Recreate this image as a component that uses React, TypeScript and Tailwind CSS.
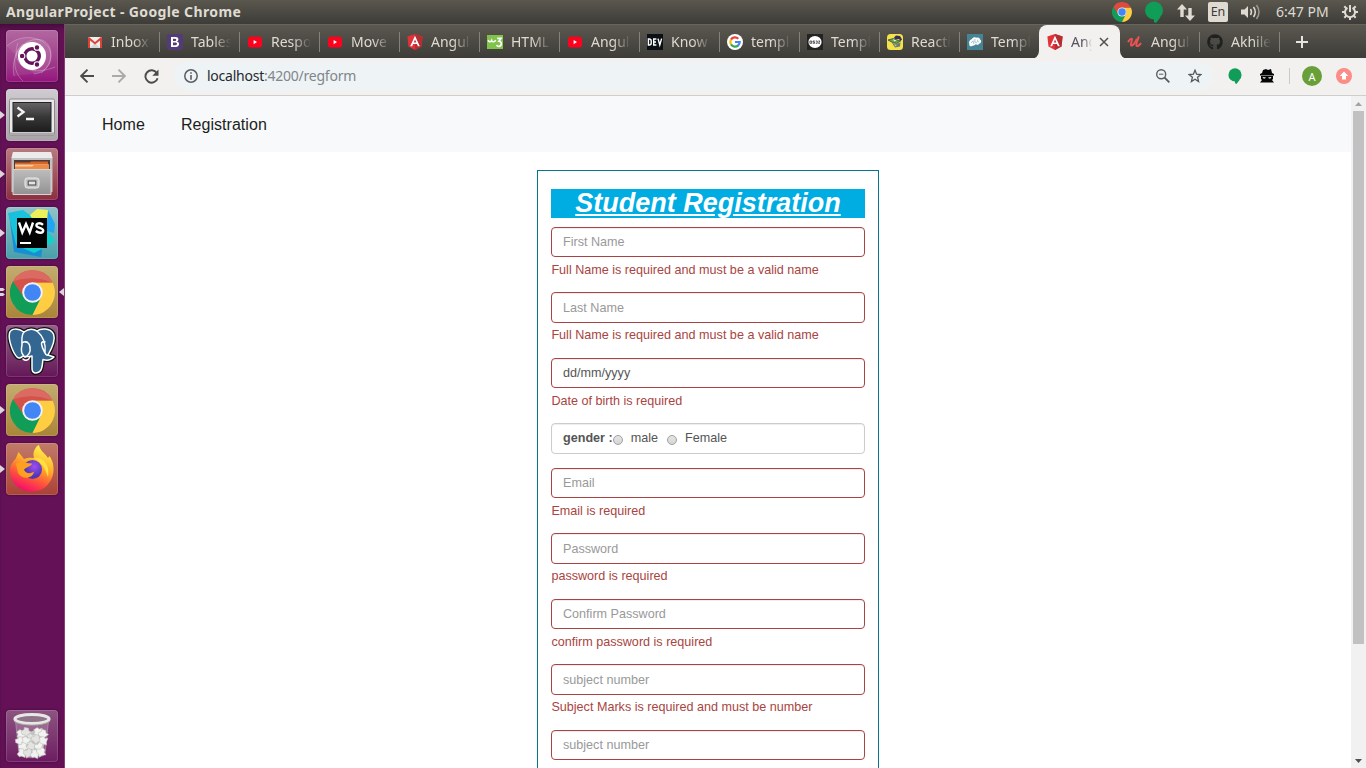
import React from "react";
import { FaGithub } from "react-icons/fa";

const UI = "font-['Noto_Sans',sans-serif]";

function ChromeLogo({ size, soft }: { size: number; soft?: boolean }) {
  return (
    <svg width={size} height={size} viewBox="0 0 48 48">
      <path d="M3.2 12A24 24 0 0 1 44.8 12L45.5 13.5H24A10.5 10.5 0 0 0 14.9 18.8L13.6 30Z" fill={soft ? "#d5524a" : "#dd4b3e"} />
      <path d="M3.2 12A24 24 0 0 0 24 48L34 29.5L24 34.5A10.5 10.5 0 0 1 14.9 29.2Z" fill="#109d58" />
      <path d="M24 48A24 24 0 0 0 45.5 13.5H24A10.5 10.5 0 0 1 33.1 29.2Z" fill="#ffcd42" />
      {soft && <path d="M3.2 12A24 24 0 0 1 45.5 13.5Q24 5 3.2 12Z" fill="#fff" fillOpacity=".14" />}
      <circle cx="24" cy="24" r="11" fill="#f3f3f3" />
      <circle cx="24" cy="24" r="8.9" fill="#4285f4" />
    </svg>
  );
}

function Angular() {
  return (
    <svg width="16" height="16" viewBox="0 0 16 16">
      <path d="M8 0L15.6 2.6L14.5 12.4L8 16L1.5 12.4L.4 2.6Z" fill="#e23237" />
      <path d="M8 0L15.6 2.6L14.5 12.4L8 16Z" fill="#b52e31" />
      <path d="M8 1.8L3.2 12.2H5.1L6.1 9.9H9.9L10.9 12.2H12.8ZM8 5.4L9.3 8.4H6.7Z" fill="#fff" fillRule="evenodd" />
    </svg>
  );
}

function Youtube() {
  return (
    <svg width="16" height="16" viewBox="0 0 16 16">
      <rect x="1" y="2.7" width="14" height="10.8" rx="2.5" fill="#ff001d" />
      <path d="M6.6 6L10 8.1L6.6 10.2Z" fill="#fff" />
    </svg>
  );
}

const icons: Record<string, React.ReactNode> = {
  gmail: (
    <svg width="16" height="16" viewBox="0 0 16 16">
      <rect x="1" y="3" width="14" height="11" rx="1" fill="#eee" />
      <path d="M3 14L8 9L13 14Z" fill="#d6d6d6" />
      <path d="M1 14V4.2Q1 3 2 3L8 8L14 3Q15 3 15 4.2V14H13V6.5L8 10.5L3 6.5V14Z" fill="#dc4336" />
    </svg>
  ),
  bootstrap: (
    <svg width="16" height="16" viewBox="0 0 16 16">
      <rect width="16" height="16" rx="2.4" fill="#533b78" />
      <path d="M4 3H8.6C12 3 12.2 6.8 9.8 7.6C13.2 8.2 12.7 13 8.8 13H4ZM6 4.7V7H8C9.8 7 9.7 4.7 8 4.7ZM6 8.6V11.3H8.4C10.6 11.3 10.5 8.6 8.4 8.6Z" fill="#fff" fillRule="evenodd" />
    </svg>
  ),
  youtube: <Youtube />,
  angular: <Angular />,
  w3: (
    <svg width="16" height="16" viewBox="0 0 16 16">
      <rect y="1" width="16" height="14" fill="#80c34a" />
      <path d="M1.2 6C1.7 8.4 3.7 8.4 4.7 6.4C5.3 8.4 7.5 8.4 8.7 6.2" fill="none" stroke="#fff" strokeWidth="1.5" />
      <path d="M10.2 4.4H14L11.9 7.2C15.2 7.2 15 12.4 11.8 12.4Q10.2 12.4 9.6 11" fill="none" stroke="#fff" strokeWidth="1.6" />
    </svg>
  ),
  dev: (
    <svg width="16" height="16" viewBox="0 0 16 16">
      <rect width="16" height="16" fill="#0b1014" />
      <path d="M1.4 5V11H2.3Q4.2 11 4.2 9V7Q4.2 5 2.3 5ZM9.4 5H6.7V11H9.4M6.7 8H9M11 4.6L12.8 11L14.6 4.6" fill="none" stroke="#fff" strokeWidth="1.4" />
    </svg>
  ),
  google: (
    <svg width="16" height="16" viewBox="0 0 16 16">
      <circle cx="8" cy="8" r="8" fill="#fff" />
      <g fill="none" strokeWidth="2.2">
        <path d="M4 5.6A4.7 4.7 0 0 1 11.3 4.7" stroke="#ea4335" />
        <path d="M4 5.6A4.7 4.7 0 0 0 4 10.4" stroke="#fbbc05" />
        <path d="M4 10.4A4.7 4.7 0 0 0 11.2 11.4" stroke="#34a853" />
        <path d="M8 8H12.7A4.7 4.7 0 0 1 11 11.6" stroke="#4285f4" />
      </g>
    </svg>
  ),
  os: (
    <svg width="16" height="16" viewBox="0 0 16 16">
      <rect width="16" height="16" fill="#232323" />
      <ellipse cx="8" cy="8" rx="6.6" ry="6" fill="#fff" />
      <path d="M2.9 7H4.7V9.3H2.9ZM7.8 7H6V8.1H7.6V9.3H5.8M8.8 7H10.2V9.3H8.8M11.3 7H12.9L11.5 9.3H13" fill="none" stroke="#333" strokeWidth=".8" />
    </svg>
  ),
  reactive: (
    <svg width="16" height="16" viewBox="0 0 16 16">
      <rect width="16" height="16" rx="3.5" fill="#f3e24a" />
      <path d="M7 3.5L9 1.6L13 2L15 5.5L13.5 7L12 5L8 5Z" fill="#3a2c5c" />
      <path d="M1 6L6 4.6L13.6 7L9.5 9.5L5.5 8.5Z" fill="#60a547" stroke="#223" strokeWidth=".6" />
      <path d="M5.6 5.2L9.5 6.2L7.5 7.6Z" fill="#e9efe8" />
      <path d="M5 9L9 10L13.5 8.5L13 12.5L8 13.5Z" fill="#70777d" />
      <path d="M7 10.4L10 10.8L8.6 12.2Z" fill="#cfe05a" />
    </svg>
  ),
  brain: (
    <svg width="16" height="16" viewBox="0 0 16 16">
      <rect width="16" height="16" fill="#458494" />
      <path d="M2.4 10C1.4 8 3 5.7 4.7 5.3C6 3 8.3 3 9.4 3.8C11.8 3 13 4.4 13 5.6C15 7 14 9.3 12.5 9.5C11.8 11 9.5 11 8.6 10.3C7.7 12.1 5.5 11.5 5 12C3.5 13 2 11.7 2.4 10Z" fill="#fff" />
      <path d="M4 9L6 6.8L7 10M8 5L7.8 8L10 9M11 5.5L10.3 7.5L12.3 8" stroke="#86aeb7" strokeWidth=".7" fill="none" />
    </svg>
  ),
  udemy: (
    <svg width="16" height="16" viewBox="0 0 16 16">
      <path d="M1.4 7.4C2.6 5.8 4 4.4 4.9 4.9C6 5.6 3.2 9.6 4 11.2C5 12.8 7.6 9.6 9.4 5.6" fill="none" stroke="#ec5252" strokeWidth="1.9" strokeLinecap="round" />
      <path d="M11.6 3.2C10.4 6.4 8.6 10.6 9.6 11.7C10.6 12.6 12.4 11.2 13.6 9.7" fill="none" stroke="#ec5252" strokeWidth="2.1" strokeLinecap="round" />
    </svg>
  ),
  github: <FaGithub size={16} color="#202020" />,
};

const tabs: { icon: string; label: string; active?: boolean; edge?: boolean }[] = [
  { icon: "gmail", label: "Inbox" },
  { icon: "bootstrap", label: "Tables" },
  { icon: "youtube", label: "Respo" },
  { icon: "youtube", label: "Move" },
  { icon: "angular", label: "Angul" },
  { icon: "w3", label: "HTML" },
  { icon: "youtube", label: "Angul" },
  { icon: "dev", label: "Know" },
  { icon: "google", label: "templ" },
  { icon: "os", label: "Templ" },
  { icon: "reactive", label: "Reacti" },
  { icon: "brain", label: "Templ", edge: true },
  { icon: "angular", label: "Ang", active: true },
  { icon: "udemy", label: "Angul", },
  { icon: "github", label: "Akhile" },
];

function Tab({ icon, label, active, edge }: { icon: string; label: string; active?: boolean; edge?: boolean }) {
  if (active) {
    return (
      <div className="relative flex h-[34px] w-[81px] -mr-px shrink-0 items-center rounded-t-[8px] bg-[#f2f1f0] pl-2 text-[#54545c]">
        <svg className="absolute -left-2 bottom-0" width="8" height="8" viewBox="0 0 8 8"><path d="M8 0V8H0A8 8 0 0 0 8 0Z" fill="#f2f1f0" /></svg>
        <svg className="absolute -right-2 bottom-0" width="8" height="8" viewBox="0 0 8 8"><path d="M0 0V8H8A8 8 0 0 1 0 0Z" fill="#f2f1f0" /></svg>
        <span className="shrink-0">{icons[icon]}</span>
        <span className="ml-2 w-[21px] overflow-hidden whitespace-nowrap text-[14px] leading-[20px] [mask-image:linear-gradient(to_right,#000_60%,transparent)]">{label}</span>
        <svg className="ml-[7px] shrink-0" width="10" height="10" viewBox="0 0 10 10"><path d="M1 1L9 9M9 1L1 9" stroke="#505050" strokeWidth="1.5" /></svg>
      </div>
    );
  }
  return (
    <div className="flex h-[34px] w-20 shrink-0 items-center pl-2 text-[#dfdbd2]">
      <span className="shrink-0">{icons[icon]}</span>
      <span className="ml-2 w-[40px] shrink-0 overflow-hidden whitespace-nowrap text-[14px] leading-[20px] [mask-image:linear-gradient(to_right,#000_55%,transparent)]">{label}</span>
      {!edge && <span className="ml-2 h-5 w-px shrink-0 bg-[#83817b]" />}
    </div>
  );
}

function Tile({ tone, children, left, right }: { tone: string; children: React.ReactNode; left?: "arrow" | "bars"; right?: boolean }) {
  return (
    <div className="flex h-[52px] w-[65px] shrink-0 items-center">
      <div className="flex w-[6px] items-center">
        {left === "arrow" && <svg width="5" height="8" viewBox="0 0 5 8"><path d="M0 0L5 4L0 8Z" fill="#dcd5da" /></svg>}
        {left === "bars" && <svg width="5" height="8" viewBox="0 0 5 8"><path d="M0 0H3L5 1.5L3 3H0ZM0 5H3L5 6.5L3 8H0Z" fill="#dcd5da" /></svg>}
      </div>
      <div className={`flex size-[52px] items-center justify-center overflow-hidden rounded-[4px] shadow-[inset_0_0_0_1px_rgba(255,255,255,0.14),0_0_3px_rgba(0,0,0,0.4)] ${tone}`}>{children}</div>
      {right && <svg className="ml-px" width="5" height="8" viewBox="0 0 5 8"><path d="M5 0L0 4L5 8Z" fill="#dcd5da" /></svg>}
    </div>
  );
}

function Ubuntu() {
  return (
    <svg width="52" height="52" viewBox="0 0 52 52">
      <g fill="none" stroke="#fff" strokeOpacity=".25" strokeWidth="1">
        <path d="M8 46C4 24 18 6 36 10C49 15 47 35 35 43" fill="#fff" fillOpacity=".07" />
        <path d="M1 16C13 4 35 5 43 18C48 29 43 42 28 44" fill="#fff" fillOpacity=".08" />
        <path d="M12 13C4 34 22 48 49 37M17 51C6 41 6 23 17 14" />
      </g>
      <circle cx="26" cy="26" r="14" fill="#fff" />
      <circle cx="26" cy="26" r="7.3" fill="none" stroke="#63145a" strokeWidth="3.4" />
      <path d="M26 26L16.5 26M26 26L31 17.4M26 26L31 34.6" stroke="none" />
      <g fill="#63145a" stroke="#fff" strokeWidth="1.1">
        <circle cx="16.1" cy="26" r="2.8" /><circle cx="31" cy="17.4" r="2.8" /><circle cx="31" cy="34.6" r="2.8" />
      </g>
    </svg>
  );
}

function Terminal() {
  return (
    <svg width="52" height="52" viewBox="0 0 52 52">
      <defs><linearGradient id="term" x1="0" y1="0" x2="0" y2="1"><stop stopColor="#656565" /><stop offset=".5" stopColor="#373737" /><stop offset="1" stopColor="#1d1d1d" /></linearGradient></defs>
      <rect x="3.5" y="10" width="45" height="36" rx="1.5" fill="#e9e9e9" stroke="#8a8a8a" />
      <rect x="4" y="43.5" width="44" height="2.5" fill="#aaa" />
      <rect x="7" y="13.5" width="38" height="29" fill="url(#term)" stroke="#222" />
      <path d="M11.5 18.5L17.5 23L11.5 27.5M20 30H28" stroke="#f5f5f5" strokeWidth="2.3" fill="none" />
    </svg>
  );
}

function Files() {
  return (
    <svg width="52" height="52" viewBox="0 0 52 52">
      <defs>
        <linearGradient id="cab" x1="0" y1="0" x2="0" y2="1"><stop stopColor="#bdbdbd" /><stop offset="1" stopColor="#929292" /></linearGradient>
      </defs>
      <path d="M7 4H45L46.5 10V44H5.5V10Z" fill="#c2c2c2" />
      <path d="M7 4H45L46.5 10H5.5Z" fill="#ececec" />
      <rect x="8" y="12" width="36" height="11" fill="#4c3b37" />
      <path d="M9 14.5H24L25 13.5H42V17H9Z" fill="#d9632a" /><path d="M9 16.5H43V19H9Z" fill="#f9cfa0" /><path d="M9 18.5H26L28 17H43V22H9Z" fill="#ee8c45" />
      <path d="M7 21.5H45V46.5H7Z" fill="url(#cab)" stroke="#d5d5d5" />
      <rect x="19" y="30" width="14" height="10" rx="2.5" fill="#c5c5c5" stroke="#eee" />
      <rect x="22.2" y="33" width="7.6" height="4" fill="#e4e4e4" stroke="#444" />
    </svg>
  );
}

function WebStorm() {
  return (
    <svg width="52" height="52" viewBox="0 0 52 52">
      <defs><linearGradient id="ws" x1="0" y1="0" x2="1" y2="1"><stop stopColor="#1cbce0" /><stop offset="1" stopColor="#0ed6c6" /></linearGradient></defs>
      <path d="M3 7L14 4L31 15L36 44L35 50L8 45Z" fill="#168fd7" />
      <path d="M2 6L17 3L25 9L38 18L49 34L36 42L28 46L10 38Z" fill="url(#ws)" />
      <path d="M24 8L31 2L42 3L46 14L40 20L28 15Z" fill="#eef05a" /><path d="M42 3L49 17L48 26L41 24V14Z" fill="#22a6f3" />
      <rect x="11" y="11" width="30" height="30" fill="#030303" />
      <path d="M13 15.5L16.3 25.5L20 17L23.7 25.5L27 15.5M37 17.8C34.5 15.5 30.4 16 30.4 18.5C30.4 21.2 37.2 20.4 37.2 23.5C37.2 26.4 32.5 26.5 29.8 24" fill="none" stroke="#fff" strokeWidth="2.4" />
      <path d="M14 36H25" stroke="#fff" strokeWidth="2" />
    </svg>
  );
}

function Postgres() {
  const body = "M18 7C12 3 5 3 3.5 8C2 15 7 28 11 32C13 34 15 33 17 31C21 33 24 31 26 31V43C26 49 30 48.5 33 47C37 45 36 39 37 34.5C41 36 45 35 48 32L42 30C46 23 49.5 14 47.5 9C44 2 34 3.5 31 6C27 3.5 22 4 18 7Z";
  return (
    <svg width="52" height="52" viewBox="0 0 52 52">
      <path d={body} fill="#111" stroke="#111" strokeWidth="4" strokeLinejoin="round" />
      <g fill="#336791" stroke="#fff" strokeWidth="1.5" strokeLinejoin="round" strokeLinecap="round">
        <path d={body} />
        <path d="M18 7C15 10 16 15 16 20C15 24 15 28 17.5 30.5M31 6C38 12 40 20 39 28C40 30 41 30.5 42 30M16 18C20 15 24 18 24 23C25 27 22 31 19 32M39 17C37 16 35.5 17 35.5 19C36 23 38 26 39 28M24 32C22 36 19 36 17 34" fill="none" />
      </g>
      <path d="M19.5 17.2H21.8M36.2 17H38" stroke="#fff" strokeWidth="1.6" />
    </svg>
  );
}

function Firefox() {
  return (
    <svg width="52" height="52" viewBox="0 0 52 52">
      <defs>
        <linearGradient id="fox" x1="40" y1="5" x2="20" y2="49" gradientUnits="userSpaceOnUse"><stop stopColor="#fff44f" /><stop offset=".4" stopColor="#ffae29" /><stop offset=".7" stopColor="#ff553b" /><stop offset="1" stopColor="#f50a6d" /></linearGradient>
        <radialGradient id="globe" cx=".6" cy=".35"><stop stopColor="#a24df4" /><stop offset="1" stopColor="#4f38b4" /></radialGradient>
      </defs>
      <path d="M10 15L12.5 9L18 16C23 14 27 15 28 15C26 9 30 3 33 2C34 8 39 10 42 15L43.5 13C48 19 49 29 45.5 36C41 45 34 48.5 26 48.5C13 48.5 4 39 4 27C4 21 8 18 10 15Z" fill="url(#fox)" />
      <path d="M27 15C39 13 44 24 42 34C39 25 36 19 27 15Z" fill="#ffe146" />
      <circle cx="26.5" cy="26.5" r="9.5" fill="url(#globe)" />
      <path d="M10 21C15 17 18 20 26 20.5C26 23.5 19 24 18 27C21 31 24 31 28 28.5C27 36 16 37 12 30Z" fill="#ffa020" />
    </svg>
  );
}

const paper = [
  [15, 24], [20, 22], [32, 22], [37, 24], [25, 28], [14, 31], [20, 31], [30, 29], [37, 31],
  [17, 37], [25, 36], [33, 37], [16, 43], [22, 43], [29, 44], [35, 42],
];

function Trash() {
  return (
    <svg width="52" height="52" viewBox="0 0 52 52">
      <path d="M9.5 11L13 44C17 49 35 49 39 44L42.5 11Z" fill="#fff" fillOpacity=".2" stroke="#c8afc3" strokeOpacity=".5" />
      <path d="M12 26L16 20L24 22L29 20L38 21L39 30L36 45L28 47L19 46.500L14 44Z" fill="#c2c4c0" />
      {paper.map(([x, y], i) => (
        <path key={i} transform={`translate(${x} ${y}) rotate(${(i * 47) % 90})`} d="M-4.500 -2L-1 -4.500L1 -3L4 -4L3.500 0L4.500 3L1 3L-1 4.500L-4 3L-3 0Z" fill={i % 3 === 1 ? "#e3e4e1" : "#f2f3f0"} stroke="#b9bbb7" strokeWidth=".5" />
      ))}
      <ellipse cx="26" cy="9" rx="17" ry="4.500" fill="#8f7389" stroke="#e6e8e4" strokeWidth="3.200" />
      <path d="M8 11C15 16.500 37 16.500 44 11" stroke="#aaaba5" fill="none" />
    </svg>
  );
}

function Pin({ w, h, color }: { w: number; h: number; color: string }) {
  return <svg width={w} height={h} viewBox="0 0 18 22"><circle cx="9" cy="9.500" r="9" fill={color} /><path d="M9 16L15.500 16L11 22L9 21Z" fill={color} /></svg>;
}

const detective = (
  <svg width="16" height="16" viewBox="0 0 16 16">
    <path d="M4 2L7 1L9 2L12 1L13 5L15 6V7.500H1V6L3 5ZM2 8H14V11L13 12L15 14.500H1L3 12L2 11Z" fill="#050505" />
    <path d="M3.500 9L7 9.500L6 10.600L4.500 10.500ZM9 9.500L12.500 9L11.500 10.500L10 10.600Z" fill="#fff" />
  </svg>
);

const fields: { text: string; error?: string; dark?: boolean; gender?: boolean }[] = [
  { text: "First Name", error: "Full Name is required and must be a valid name" },
  { text: "Last Name", error: "Full Name is required and must be a valid name" },
  { text: "dd/mm/yyyy", error: "Date of birth is required", dark: true },
  { text: "", gender: true },
  { text: "Email", error: "Email is required" },
  { text: "Password", error: "password is required" },
  { text: "Confirm Password", error: "confirm password is required" },
  { text: "subject number", error: "Subject Marks is required and must be number" },
  { text: "subject number" },
];

function Radio() {
  return <span className="mt-[2px] size-[10px] rounded-full border border-[#a0a0a0] bg-gradient-to-b from-[#e6e6e6] to-[#d5d5d5]" />;
}

function Field({ f }: { f: (typeof fields)[number] }) {
  if (f.gender) {
    return (
      <div className="h-[44.3px] shrink-0">
        <div className="flex h-[30.6px] items-center rounded-[4px] border border-[#ccc] pl-[11px] text-[12.6px] text-[#555] shadow-[inset_0_1px_1px_rgba(0,0,0,0.075)]">
          <b>gender :</b><Radio /><span className="ml-2">male</span><span className="ml-[9px] flex items-center"><Radio /></span><span className="ml-2">Female</span>
        </div>
      </div>
    );
  }
  return (
    <div className="h-[65.55px] shrink-0">
      <div className={`flex h-[30.6px] items-center rounded-[4px] border border-[#a94442] pl-[11px] pt-[0.85px] text-[12.6px] shadow-[inset_0_1px_1px_rgba(0,0,0,0.075)] ${f.dark ? "text-[#555]" : "text-[#999]"}`}>{f.text}</div>
      {f.error && <div className="mt-[3.4px] pl-[0.4px] text-[12.6px] leading-[18px] text-[#a94442]">{f.error}</div>}
    </div>
  );
}

export default function App() {
  return (
    <div className={`flex h-[768px] w-[1366px] flex-col overflow-hidden bg-white ${UI}`}>
      <header className="flex h-6 shrink-0 items-center justify-between bg-gradient-to-b from-[#5a574e] to-[#3d3c38] text-[#dfdbd2]">
        <span className="pl-[6px] text-[14px] font-bold leading-6 tracking-[0.37px]">AngularProject - Google Chrome</span>
        <div className="flex h-6 w-[254px] items-center">
          <ChromeLogo size={20} />
          <span className="ml-[13px] flex"><Pin w={18} h={22} color="#0f9d58" /></span>
          <svg className="ml-[14px]" width="18" height="17" viewBox="0 0 18 17"><path d="M5 0L10 5.5H6.7V13H3.3V5.5H0ZM13 17L8 11.5H11.3V4H14.7V11.5H18Z" fill="#dfdbd2" /></svg>
          <span className="ml-[13px] flex h-5 w-5 items-center justify-center rounded-[2px] bg-[#dfdbd2] text-[12.5px] text-[#3c3b37]">En</span>
          <svg className="ml-[13px]" width="21" height="16" viewBox="0 0 21 16"><path d="M0 5.5H3.5L7 2V14L3.5 10.5H0Z" fill="#dfdbd2" /><path d="M9.5 5Q11.5 8 9.5 11M12.5 3Q16 8 12.5 13" stroke="#dfdbd2" strokeWidth="1.5" fill="none" /><path d="M15.5 1Q20.5 8 15.5 15" stroke="#9b988f" strokeWidth="1.5" fill="none" /></svg>
          <span className="ml-[14px] w-[54px] whitespace-nowrap text-[14px] leading-[22px]">6:47 PM</span>
          <svg className="ml-[12px]" width="16" height="18" viewBox="0 0 16 18"><g fill="none" stroke="#dfdbd2" strokeWidth="2"><path d="M5.5 4.8A5 5 0 1 0 10.500 4.800" /><path d="M8 2V9M0 9H3M13 9H16M2.300 3.300L4.500 5.500M11.500 5.500L13.700 3.300M2.300 14.700L4.500 12.500M11.500 12.500L13.700 14.700M8 14V17" /></g></svg>
        </div>
      </header>

      <div className="flex min-h-0 flex-1">
        <aside className="flex w-[65px] shrink-0 flex-col justify-between bg-[#651157] pb-[6px] pt-[6px] shadow-[inset_-1px_0_0_#854078,inset_0_5px_6px_-3px_rgba(20,0,15,0.5)]">
          <div className="flex flex-col gap-[7px]">
            <Tile tone="bg-gradient-to-b from-[#b168a0] to-[#94127d]"><Ubuntu /></Tile>
            <Tile tone="bg-gradient-to-b from-[#d0cbd0] to-[#aaa2a9]" left="arrow"><Terminal /></Tile>
            <Tile tone="bg-gradient-to-b from-[#b87a80] to-[#8c2e40]" left="arrow"><Files /></Tile>
            <Tile tone="bg-gradient-to-b from-[#8fc4c9] to-[#46a0aa]" left="arrow"><WebStorm /></Tile>
            <Tile tone="bg-gradient-to-b from-[#c4ac70] to-[#aa8538]" left="bars" right><ChromeLogo size={45} soft /></Tile>
            <Tile tone="bg-gradient-to-b from-[#926088] to-[#651558]"><Postgres /></Tile>
            <Tile tone="bg-gradient-to-b from-[#c4ac70] to-[#aa8538]" left="arrow"><ChromeLogo size={45} soft /></Tile>
            <Tile tone="bg-gradient-to-b from-[#c27a69] to-[#aa4236]" left="arrow"><Firefox /></Tile>
          </div>
          <Tile tone="bg-gradient-to-b from-[#8d5382] to-[#6d1b61]"><Trash /></Tile>
        </aside>

        <main className="flex min-w-0 flex-1 flex-col">
          <div className="flex h-[34px] shrink-0 items-center border-t border-[#66645c] bg-gradient-to-b from-[#5b5850] to-[#3d3c38] pl-[14px]">
            {tabs.map((t, i) => <Tab key={i} {...t} />)}
            <svg className="ml-[17px]" width="12" height="12" viewBox="0 0 12 12"><path d="M6 0V12M0 6H12" stroke="#e8e5dc" strokeWidth="2" /></svg>
          </div>

          <div className="flex h-[38px] shrink-0 items-center border-b border-[#cfcecd] bg-[#f2f1f0] pb-px">
            <svg className="ml-[15px]" width="14" height="14" viewBox="0 0 14 14"><path d="M7.5 .7L1.2 7L7.5 13.3M1 7H14" fill="none" stroke="#4b4b4b" strokeWidth="1.9" /></svg>
            <svg className="ml-[18px]" width="14" height="14" viewBox="0 0 14 14"><path d="M6.5 .7L12.8 7L6.5 13.3M13 7H0" fill="none" stroke="#aaa" strokeWidth="1.9" /></svg>
            <svg className="ml-[18px]" width="15" height="15" viewBox="0 0 15 15"><path d="M12.8 4A6.2 6.2 0 1 0 13.6 9.2" fill="none" stroke="#4b4b4b" strokeWidth="1.9" /><path d="M14.5 .5V6.7H8.3Z" fill="#4b4b4b" /></svg>
            <div className="ml-[15px] flex h-7 w-[1039px] items-center rounded-full bg-[#eef3f5]">
              <svg className="ml-[10px]" width="14" height="14" viewBox="0 0 14 14"><circle cx="7" cy="7" r="6.2" fill="none" stroke="#5a5c60" strokeWidth="1.5" /><path d="M7 3.2V4.8M7 6V10.7" stroke="#5a5c60" strokeWidth="1.6" /></svg>
              <span className="ml-[9px] text-[14px] leading-5 tracking-[-0.24px] text-[#80868b]"><span className="text-[#26282c]">localhost</span>:4200/regform</span>
              <svg className="ml-auto" width="14" height="14" viewBox="0 0 14 14"><circle cx="5.2" cy="5.2" r="4.5" fill="none" stroke="#5a5c60" strokeWidth="1.4" /><path d="M3 5.2H7.4" stroke="#5a5c60" /><path d="M8.5 8.5L13.3 13.3" stroke="#5a5c60" strokeWidth="1.8" /></svg>
              <svg className="ml-[18px] mr-[11px]" width="14" height="14" viewBox="0 0 14 14"><path d="M7 1.2L8.6 5.2L12.9 5.5L9.6 8.3L10.6 12.5L7 10.2L3.4 12.5L4.4 8.3L1.1 5.5L5.4 5.2Z" fill="none" stroke="#55585c" strokeWidth="1.3" /></svg>
            </div>
            <span className="ml-[15px] flex"><Pin w={14} h={16} color="#0f9d58" /></span>
            <span className="ml-[17px]">{detective}</span>
            <span className="ml-[14px] h-4 w-px bg-[#cbcac9]" />
            <span className="ml-[12px] flex size-5 items-center justify-center rounded-full bg-[#689f38] text-[11px] leading-none text-white">A</span>
            <svg className="ml-[14px]" width="16" height="16" viewBox="0 0 16 16"><circle cx="8" cy="8" r="8" fill="#fa8d86" /><path d="M8 3.5L12.3 8H10V11.5H6V8H3.7Z" fill="#fff" /></svg>
          </div>

          <div className="flex min-h-0 flex-1 font-['Liberation_Sans',sans-serif]">
            <div className="flex min-w-0 flex-1 flex-col">
              <nav className="flex h-14 shrink-0 items-center gap-9 bg-[#f8f9fb] pl-[37px] pt-[2px] text-[16px] tracking-[0.05px] text-[#1c1e20]">
                <span>Home</span><span>Registration</span>
              </nav>
              <form className="ml-[472px] mt-[18px] flex h-[620px] w-[342px] shrink-0 flex-col border border-[#087590] px-[13px] pt-[18px]">
                <h1 className="mb-[8.75px] h-[29px] shrink-0 bg-[#00ade3] text-center text-[27px] font-bold italic leading-[28px] text-white underline">Student Registration</h1>
                {fields.map((f, i) => <Field key={i} f={f} />)}
              </form>
            </div>
            <div className="flex w-[15px] shrink-0 flex-col items-center bg-[#f1f1f1]">
              <div className="flex h-[15px] items-center"><svg width="7" height="4" viewBox="0 0 7 4"><path d="M0 4L3.5 0L7 4Z" fill="#a3a3a3" /></svg></div>
              <div className="h-[533px] w-[11px] bg-[#c1c1c1]" />
              <div className="mt-auto flex h-[15px] items-center"><svg width="7" height="4" viewBox="0 0 7 4"><path d="M0 0L3.5 4L7 0Z" fill="#505050" /></svg></div>
            </div>
          </div>
        </main>
      </div>
    </div>
  );
}
